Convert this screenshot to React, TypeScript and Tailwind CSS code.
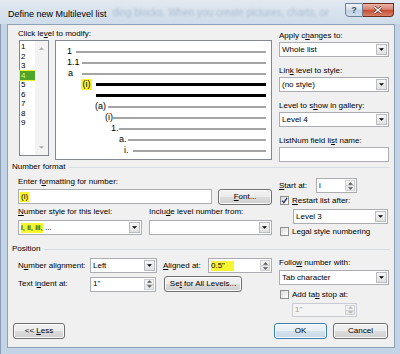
import React from "react";

type Kids = { children?: React.ReactNode; className?: string };

const U = ({ children }: Kids) => <span className="underline">{children}</span>;

const Tri = ({ up, color = "#000" }: { up?: boolean; color?: string }) => (
  <svg width="5" height="3" viewBox="0 0 6 3" className="block">
    <path d={up ? "M0 3h6L3 0z" : "M0 0h6L3 3z"} fill={color} />
  </svg>
);

const Label = ({ children, className = "" }: Kids) => (
  <div className={`h-[10px] whitespace-nowrap leading-[10px] ${className}`}>
    {children}
  </div>
);

const Combo = ({ children, className = "" }: Kids) => (
  <div className={`flex h-[15px] border border-[#abadb3] bg-white ${className}`}>
    <div className="flex flex-1 items-center overflow-hidden whitespace-nowrap pl-[2px]">
      {children}
    </div>
    <div className="my-[1px] mr-[1px] flex w-[11px] items-center justify-center border border-[#b9bdc3] bg-[linear-gradient(#f6f6f6,#e0e0e0)]">
      <Tri />
    </div>
  </div>
);

const Spin = ({
  children,
  className = "",
  disabled,
}: Kids & { disabled?: boolean }) => (
  <div
    className={`flex border ${
      disabled
        ? "border-[#c9ccd2] bg-[#f4f4f4] text-[#a0a0a0]"
        : "border-[#abadb3] bg-white"
    } ${className}`}
  >
    <div className="flex flex-1 items-center whitespace-nowrap pl-[2px]">
      {children}
    </div>
    <div className="my-[1px] mr-[1px] flex w-[10px] flex-col border border-[#cdd0d5]">
      <div className="flex flex-1 items-center justify-center border-b border-[#cdd0d5] bg-[#f3f3f3]">
        <Tri up color={disabled ? "#b5b5b5" : "#555"} />
      </div>
      <div className="flex flex-1 items-center justify-center bg-[#e8e8e8]">
        <Tri color={disabled ? "#b5b5b5" : "#555"} />
      </div>
    </div>
  </div>
);

const Btn = ({
  children,
  className = "",
  primary,
}: Kids & { primary?: boolean }) => (
  <div
    className={`flex h-[16px] items-center justify-center whitespace-pre rounded-[3px] border shadow-[inset_0_0_0_1px_#fbfbfb] ${
      primary
        ? "border-[#3c7fb1] bg-[linear-gradient(#f1f6fa,#e6eff5_50%,#d5e3ed_50%,#c6d9e6)]"
        : "border-[#707070] bg-[linear-gradient(#f2f2f2,#ebebeb_50%,#dddddd_50%,#cfcfcf)]"
    } ${className}`}
  >
    {children}
  </div>
);

const Check = ({ checked }: { checked?: boolean }) => (
  <div className="flex h-[9px] w-[9px] shrink-0 items-center justify-center border border-[#8f8f8f] bg-[linear-gradient(135deg,#dcdcdc,#ffffff)]">
    {checked && (
      <svg width="7" height="7" viewBox="0 0 7 7" className="block">
        <path d="M1 3.6l1.8 2L6 1" stroke="#2b3d63" strokeWidth="1.4" fill="none" />
      </svg>
    )}
  </div>
);

const Header = ({ children, className = "" }: Kids) => (
  <div className={`flex h-[10px] items-center px-[4px] ${className}`}>
    <span className="whitespace-nowrap leading-[10px]">{children}</span>
    <div className="ml-[4px] h-px flex-1 bg-[#d8dde3]" />
  </div>
);

const previewRows = [
  { pad: "pl-[11px]", box: "w-[9px]", text: "1" },
  { pad: "pl-[11px]", box: "w-[15px]", text: "1.1" },
  { pad: "pl-[12px]", box: "w-[14px]", text: "a" },
  { pad: "pl-[25px]", box: "w-[15px]", text: "(i)", mark: true, bold: true },
  { pad: "pl-[40px]", box: "w-0", text: "", bold: true },
  { pad: "pl-[39px]", box: "w-[13px]", text: "(a)" },
  { pad: "pl-[49px]", box: "w-[8px]", text: "(i)" },
  { pad: "pl-[55px]", box: "w-[8px]", text: "1." },
  { pad: "pl-[63px]", box: "w-[9px]", text: "a." },
  { pad: "pl-[68px]", box: "w-[9px]", text: "i." },
];

const levels = ["1", "2", "3", "4", "5", "6", "7", "8", "9"];

export default function App() {
  return (
    <div className="flex h-[354px] w-[400px] flex-col overflow-hidden bg-[#c4d4e7] font-['Liberation_Sans',Arial,sans-serif] text-[8px] leading-[10px] text-black shadow-[inset_1px_0_0_#8a9db4]">
      {/* title bar */}
      <div className="flex h-[24px] shrink-0 items-start bg-[linear-gradient(#e2e9f1,#cfdcea)]">
        <span className="whitespace-nowrap pl-[8px] pt-[9px] text-[9px] leading-[10px]">
          Define new Multilevel list
        </span>
        <span className="ml-[6px] shrink-0 whitespace-nowrap pt-[8px] text-[10px] leading-[10px] text-[#a9bacd] blur-[1px]">
          ding blocks. When you create pictures, charts, or
        </span>
        <div className="flex-1" />
        <div className="mr-[6px] mt-[3px] flex">
          <div className="flex h-[14px] w-[18px] items-center justify-center rounded-bl-[4px] border border-[#6c7e95] bg-[linear-gradient(#eef2f7,#d6e0ec_45%,#c2d0e1_50%,#d0dcea)] text-[9px] font-bold leading-none text-[#3e4e66]">
            ?
          </div>
          <div className="flex h-[14px] w-[31px] items-center justify-center rounded-br-[4px] border border-l-0 border-[#6b2e24] bg-[linear-gradient(#eab4a6,#d88470_45%,#c54b32_50%,#d9816b)]">
            <svg width="10" height="8" viewBox="0 0 10 8" className="block">
              <path d="M1.5 1l7 6M8.5 1l-7 6" stroke="#5a1e14" strokeWidth="2.6" />
              <path d="M1.5 1l7 6M8.5 1l-7 6" stroke="#fff" strokeWidth="1.5" />
            </svg>
          </div>
        </div>
      </div>

      {/* client area */}
      <div className="ml-[7px] flex h-[324px] w-[388px] flex-col border border-[#8ea0b6] bg-[#f0f0f0]">
        {/* top section */}
        <div className="flex pl-[10px]">
          <div className="w-[254px]">
            <Label className="mt-[4px]">
              Click le<U>v</U>el to modify:
            </Label>
            <div className="mt-[1px] flex">
              <div className="ml-[1px] flex h-[116px] w-[30px] border border-[#828790] bg-white">
                <div className="w-[15px] pt-[1px]">
                  {levels.map((l) => (
                    <div
                      key={l}
                      className={`h-[9.5px] pl-[1px] leading-[9.5px] ${
                        l === "4"
                          ? "bg-[#4fa52a] text-[#dff37e] shadow-[0_0_0_1px_#eef22e]"
                          : ""
                      }`}
                    >
                      {l}
                    </div>
                  ))}
                </div>
                <div className="flex flex-1 flex-col items-center justify-between bg-[#f3f3f3] pb-[6px] pt-[6px]">
                  <Tri up color="#a8a8a8" />
                  <Tri color="#a8a8a8" />
                </div>
              </div>
              <div className="ml-[6px] h-[120px] w-[217px] border border-[#828790] bg-white pt-[5px] text-[9px] text-black">
                {previewRows.map((r, i) => (
                  <div key={i} className={`flex h-[11px] items-center pr-[5px] ${r.pad}`}>
                    <div className={`shrink-0 whitespace-nowrap leading-[11px] ${r.box}`}>
                      {r.mark ? (
                        <span className="inline-block w-[11px] bg-[#f7f530] text-center">
                          {r.text}
                        </span>
                      ) : (
                        r.text
                      )}
                    </div>
                    <div
                      className={`flex-1 ${
                        r.bold ? "h-[3px] bg-black" : "h-[2px] bg-[#a4a4a4]"
                      }`}
                    />
                  </div>
                ))}
              </div>
            </div>
          </div>

          <div className="ml-[7px] w-[111px]">
            <Label className="mt-[6px]">
              Apply c<U>h</U>anges to:
            </Label>
            <Combo className="mt-[1px] w-[110px]">Whole list</Combo>
            <Label className="mt-[9px]">
              Lin<U>k</U> level to style:
            </Label>
            <Combo className="mt-[1px] w-[110px]">(no style)</Combo>
            <Label className="mt-[9px]">
              Level to s<U>h</U>ow in gallery:
            </Label>
            <Combo className="mt-[1px] w-[110px]">Level 4</Combo>
            <Label className="mt-[9px]">
              ListNum field li<U>s</U>t name:
            </Label>
            <div className="mt-[1px] h-[15px] w-[110px] border border-[#abadb3] bg-white" />
          </div>
        </div>

        <Header>Number format</Header>

        {/* number format section */}
        <div className="flex pl-[10px]">
          <div className="w-[254px]">
            <Label className="mt-[5px]">
              Enter f<U>o</U>rmatting for number:
            </Label>
            <div className="mt-[2px] flex items-start">
              <div className="flex h-[15px] w-[194px] items-center border border-[#abadb3] bg-white pl-[1px]">
                <span className="bg-[#f7f530] px-[1px]">(i)</span>
              </div>
              <Btn className="ml-[6px] w-[54px]">
                <U>F</U>ont...
              </Btn>
            </div>
            <div className="mt-[2px] flex">
              <div className="w-[124px]">
                <Label>
                  <U>N</U>umber style for this level:
                </Label>
                <Combo className="mt-[3px] w-[124px]">
                  <span className="bg-[#f7f530]">i, ii, iii,</span>
                  <span>&nbsp;...</span>
                </Combo>
              </div>
              <div className="ml-[7px] w-[123px]">
                <Label>
                  Inclu<U>d</U>e level number from:
                </Label>
                <Combo className="mt-[3px] w-[123px]">{""}</Combo>
              </div>
            </div>
          </div>

          <div className="ml-[7px] w-[111px]">
            <div className="mt-[6px] flex h-[15px] items-center">
              <span className="w-[37px] whitespace-nowrap">
                <U>S</U>tart at:
              </span>
              <Spin className="h-[15px] w-[41px]">i</Spin>
            </div>
            <div className="mt-[3px] flex h-[9px] items-center">
              <div className="ml-[1px]">
                <Check checked />
              </div>
              <span className="ml-[3px] whitespace-nowrap">
                <U>R</U>estart list after:
              </span>
            </div>
            <Combo className="ml-[14px] mt-[4px] w-[95px]">Level 3</Combo>
            <div className="mt-[3px] flex h-[9px] items-center">
              <div className="ml-[1px]">
                <Check />
              </div>
              <span className="ml-[3px] whitespace-nowrap">
                Le<U>g</U>al style numbering
              </span>
            </div>
          </div>
        </div>

        <Header className="mt-[8px]">Position</Header>

        {/* position section */}
        <div className="flex pl-[10px]">
          <div className="w-[254px]">
            <div className="mt-[4px] flex h-[15px] items-center">
              <span className="w-[72px] whitespace-nowrap">
                N<U>u</U>mber alignment:
              </span>
              <Combo className="w-[67px]">Left</Combo>
              <span className="ml-[6px] w-[45px] whitespace-nowrap">
                <U>A</U>ligned at:
              </span>
              <Spin className="h-[15px] w-[64px]">
                <span className="inline-block w-[23px] bg-[#f7f530]">0.5"</span>
              </Spin>
            </div>
            <div className="mt-[3px] flex h-[16px] items-center">
              <span className="w-[72px] whitespace-nowrap">
                Text i<U>n</U>dent at:
              </span>
              <Spin className="h-[15px] w-[66px]">1"</Spin>
              <Btn className="ml-[8px] w-[78px]">
                {"Se"}
                <U>t</U>
                {" for All Levels..."}
              </Btn>
            </div>
          </div>

          <div className="ml-[7px] w-[111px]">
            <Label className="mt-[4px]">
              Follo<U>w</U> number with:
            </Label>
            <Combo className="mt-[2px] w-[110px]">Tab character</Combo>
            <div className="mt-[5px] flex h-[9px] items-center">
              <div className="ml-[1px]">
                <Check />
              </div>
              <span className="ml-[3px] whitespace-nowrap">
                Add ta<U>b</U> stop at:
              </span>
            </div>
            <Spin disabled className="ml-[13px] mt-[4px] h-[14px] w-[65px]">
              1"
            </Spin>
          </div>
        </div>

        {/* footer */}
        <div className="mt-[6px] flex pl-[5px] pr-[6px]">
          <Btn className="w-[52px]">
            {"<< "}
            <U>L</U>
            {"ess"}
          </Btn>
          <div className="flex-1" />
          <Btn primary className="w-[53px]">
            OK
          </Btn>
          <Btn className="ml-[6px] w-[55px]">Cancel</Btn>
        </div>
      </div>
    </div>
  );
}
